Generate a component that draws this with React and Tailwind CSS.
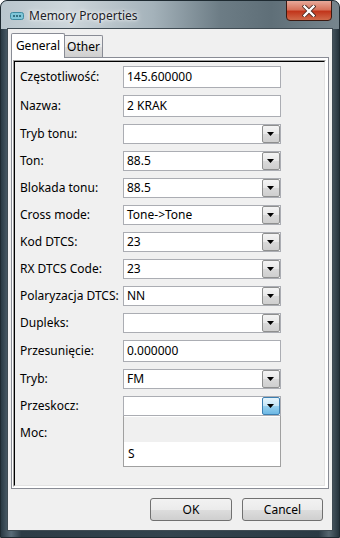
import React from "react";

const rows = [
  { label: "Częstotliwość:", type: "text", value: "145.600000" },
  { label: "Nazwa:", type: "text", value: "2 KRAK" },
  { label: "Tryb tonu:", type: "combo", value: "" },
  { label: "Ton:", type: "combo", value: "88.5" },
  { label: "Blokada tonu:", type: "combo", value: "88.5" },
  { label: "Cross mode:", type: "combo", value: "Tone->Tone" },
  { label: "Kod DTCS:", type: "combo", value: "23" },
  { label: "RX DTCS Code:", type: "combo", value: "23" },
  { label: "Polaryzacja DTCS:", type: "combo", value: "NN" },
  { label: "Dupleks:", type: "combo", value: "" },
  { label: "Przesunięcie:", type: "text", value: "0.000000" },
  { label: "Tryb:", type: "combo", value: "FM" },
  { label: "Przeskocz:", type: "combo", value: "", open: true },
  { label: "Moc:", type: "combo", value: "" },
];

function Arrow() {
  return (
    <svg width="8" height="5" viewBox="0 0 8 5">
      <path d="M0 0 H7 L3.5 4 Z" fill="#000" />
    </svg>
  );
}

function Combo({ value, open }) {
  return (
    <div className="relative w-[158px] h-[20px] bg-white border border-[#abadb3] flex items-center">
      <span className="flex-1 pl-[3px] text-[12px] leading-none text-black">{value}</span>
      <div
        className={
          open
            ? "w-[18px] h-[18px] border border-[#3c7fb1] rounded-[2px] bg-[linear-gradient(#e5f4fc,#c4e5f6_50%,#98d1ef_51%,#6cb8e4)] flex items-center justify-center"
            : "w-[18px] h-[18px] border border-[#8e8f8f] rounded-[2px] bg-[linear-gradient(#f4f4f4,#e8e8e8_50%,#d9d9d9_51%,#cfcfcf)] flex items-center justify-center"
        }
      >
        <Arrow />
      </div>
      {open && (
        <div className="absolute left-[-1px] top-[19px] w-[158px] h-[51px] bg-white border-x border-b border-[#a0a0a0] z-20 flex flex-col">
          <div className="h-[25px] bg-[#f0f0f0] mt-[1px]"></div>
          <div className="h-[24px] flex items-center pl-[4px] text-[12px] text-black">S</div>
        </div>
      )}
    </div>
  );
}

function TextField({ value }) {
  return (
    <div className="w-[158px] h-[22px] bg-white border border-[#abadb3] flex items-center pl-[3px] text-[12px] text-black">
      {value}
    </div>
  );
}

export default function App() {
  return (
    <div className="w-[340px] h-[538px] bg-white font-['Noto_Sans',sans-serif]">
      <div className="w-[340px] h-[538px] rounded-t-[7px] border border-[#1e2a31] bg-[linear-gradient(90deg,#2a3a44,#5a6c78_3%,#2d3c46_6%,#34444e_50%,#2b3a44_94%,#56666f_97%,#26343d)] flex flex-col px-[6px] pb-[6px] relative overflow-hidden">
        {/* title bar */}
        <div className="absolute inset-x-0 top-0 h-[28px] bg-[linear-gradient(90deg,#b9c6cd,#cdd6db_20%,#a4b2ba_45%,#6c7c85_65%,#5f6f78_80%,#76858d)]"></div>
        <div className="relative h-[27px] flex items-center">
          <svg width="14" height="8" viewBox="0 0 14 8" className="ml-[3px] mt-[2px]">
            <rect x="0.5" y="0.5" width="13" height="7" rx="2" fill="#7fc6d8" stroke="#3d8aa0" />
            <circle cx="4" cy="4" r="1" fill="#1d5566" />
            <circle cx="7" cy="4" r="1" fill="#1d5566" />
            <circle cx="10" cy="4" r="1" fill="#1d5566" />
          </svg>
          <span className="ml-[5px] mt-[2px] text-[12px] text-[#1b2026] [text-shadow:0_0_6px_#ffffff,0_0_3px_#ffffff]">
            Memory Properties
          </span>
          <div className="ml-auto mr-[1px] self-start mt-[-1px] w-[46px] h-[21px] rounded-b-[4px] border border-[#3b1a12] bg-[linear-gradient(#e8a99a,#d7735c_45%,#c2361c_55%,#d06a4a)] flex items-center justify-center">
            <svg width="14" height="12" viewBox="0 0 14 12">
              <path d="M2.5 1.5 L11.5 10.5 M11.5 1.5 L2.5 10.5" stroke="#4a2a22" strokeWidth="4" strokeLinecap="square" />
              <path d="M2.5 1.5 L11.5 10.5 M11.5 1.5 L2.5 10.5" stroke="#ffffff" strokeWidth="2.4" strokeLinecap="square" />
            </svg>
          </div>
        </div>
        {/* client */}
        <div className="relative flex-1 bg-[#f0f0f0] border border-[#404c54] flex flex-col px-[2px] pt-[4px]">
          {/* tabs */}
          <div className="h-[24px] flex items-end pl-[1px] relative z-10">
            <div className="w-[54px] h-[25px] mb-[-1px] bg-white border border-b-0 border-[#898c95] rounded-t-[2px] flex items-center justify-center text-[12px] text-black pb-[1px]">
              General
            </div>
            <div className="w-[38px] h-[22px] bg-[linear-gradient(#f2f2f2,#ebebeb_50%,#dddddd_51%,#cfcfcf)] border border-l-0 border-b-0 border-[#898c95] rounded-tr-[2px] flex items-center justify-center text-[12px] text-black">
              Other
            </div>
          </div>
          {/* panel */}
          <div className="mx-[1px] h-[432px] border border-[#898c95] bg-white pt-[2px] pl-[1px] pr-[2px] pb-[1px]">
            <div className="h-full border-t border-l border-[#a0a0a0] border-r-white border-b-white border-r border-b">
              <div className="h-full border-t border-l border-black border-r border-b border-r-[#e3e3e3] border-b-[#e3e3e3] bg-[#f0f0f0] pl-[4px] pt-[4px] flex flex-col gap-[7px]">
                {rows.map((r) => (
                  <div key={r.label} className="flex items-center">
                    <div className="w-[104px] pl-[1px] text-[12px] text-black">{r.label}</div>
                    {r.type === "text" ? (
                      <TextField value={r.value} />
                    ) : (
                      <Combo value={r.value} open={r.open} />
                    )}
                  </div>
                ))}
              </div>
            </div>
          </div>
          {/* buttons */}
          <div className="flex justify-end gap-[10px] pt-[9px] pr-[7px]">
            <button className="w-[82px] h-[23px] rounded-[3px] border border-[#707070] bg-[linear-gradient(#f2f2f2,#ebebeb_50%,#dddddd_51%,#cfcfcf)] text-[12px] text-black">
              OK
            </button>
            <button className="w-[81px] h-[23px] rounded-[3px] border border-[#707070] bg-[linear-gradient(#f2f2f2,#ebebeb_50%,#dddddd_51%,#cfcfcf)] text-[12px] text-black">
              Cancel
            </button>
          </div>
        </div>
      </div>
    </div>
  );
}
